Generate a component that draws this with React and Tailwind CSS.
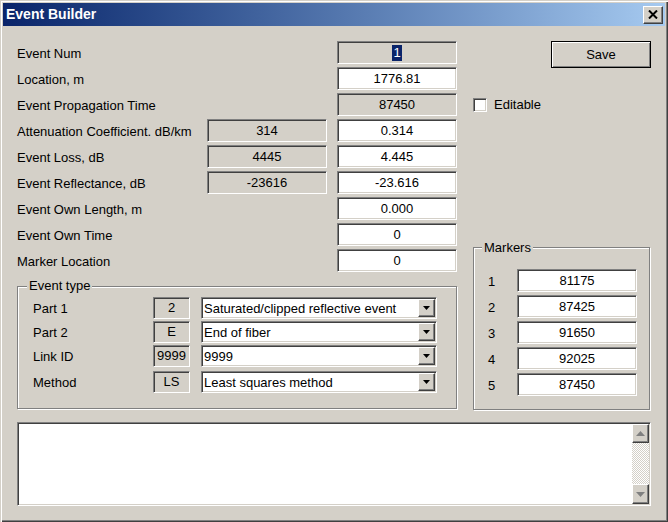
import React from 'react'

const sunken = "border border-t-[#808080] border-l-[#808080] border-b-white border-r-white shadow-[inset_1px_1px_0_#404040,inset_-1px_-1px_0_#d4d0c8]"
const raised = "border border-t-white border-l-white border-b-[#404040] border-r-[#404040] shadow-[inset_-1px_-1px_0_#808080,inset_1px_1px_0_#d4d0c8]"
const etched = "border border-[#808080] shadow-[inset_1px_1px_0_#fff,1px_1px_0_#fff]"

const Field = ({ value, gray, className = '' }) => (
    <div className={`${sunken} h-[23px] pt-[1px] flex items-center justify-center ${gray ? 'bg-[#d4d0c8]' : 'bg-white'} ${className}`}>
        {value}
    </div>
)

const Combo = ({ value }) => (
    <div className={`${sunken} bg-white h-[22px] w-[236px] flex items-center pl-[2px] pr-[1px]`}>
        <span className="flex-1 leading-none pt-[1px]">{value}</span>
        <div className={`${raised} bg-[#d4d0c8] w-[17px] h-[18px] flex items-center justify-center`}>
            <svg width="7" height="4" viewBox="0 0 7 4"><path d="M0 0h7L3.5 4z" fill="#000" /></svg>
        </div>
    </div>
)

const rows = [
    { label: 'Event Num', value: <span className="bg-[#0a246a] text-white px-[1px] leading-[16px]">1</span>, gray: true },
    { label: 'Location, m', value: '1776.81' },
    { label: 'Event Propagation Time', value: '87450', gray: true },
    { label: 'Attenuation Coefficient. dB/km', raw: '314', value: '0.314' },
    { label: 'Event Loss, dB', raw: '4445', value: '4.445' },
    { label: 'Event Reflectance, dB', raw: '-23616', value: '-23.616' },
    { label: 'Event Own Length, m', value: '0.000' },
    { label: 'Event Own Time', value: '0' },
    { label: 'Marker Location', value: '0' },
]

const eventType = [
    { label: 'Part 1', code: '2', value: 'Saturated/clipped reflective event' },
    { label: 'Part 2', code: 'E', value: 'End of fiber' },
    { label: 'Link ID', code: '9999', value: '9999' },
    { label: 'Method', code: 'LS', value: 'Least squares method' },
]

const markers = ['81175', '87425', '91650', '92025', '87450']

export default function App() {
    return (
        <div className="w-[668px] h-[522px] bg-[#d4d0c8] p-[3px] text-[13px] text-black font-['Liberation_Sans',Arial,sans-serif] shadow-[inset_1px_1px_0_#d4d0c8,inset_2px_2px_0_#fff,inset_-1px_-1px_0_#404040,inset_-2px_-2px_0_#808080] overflow-hidden">
            {/* Title bar */}
            <div className="h-[23px] flex items-center justify-between pl-[3px] pr-[2px] bg-gradient-to-r from-[#0a246a] to-[#a6caf0]">
                <span className="text-white font-bold text-[14px]">Event Builder</span>
                <div className={`${raised} bg-[#d4d0c8] w-[20px] h-[18px] flex items-center justify-center`}>
                    <svg width="10" height="9" viewBox="0 0 10 9">
                        <path d="M1 0.5l8 8M9 0.5l-8 8" stroke="#000" strokeWidth="2" />
                    </svg>
                </div>
            </div>

            <div className="pl-[14px] pt-[15px]">
                <div className="flex">
                    {/* Left column */}
                    <div className="w-[440px]">
                        <div className="flex flex-col gap-[3px]">
                            {rows.map((r) => (
                                <div key={r.label} className="flex items-center h-[23px]">
                                    <span className="w-[190px] pt-[2px]">{r.label}</span>
                                    <div className="w-[120px]">
                                        {r.raw && <Field value={r.raw} gray />}
                                    </div>
                                    <Field value={r.value} gray={r.gray} className="w-[120px] ml-[10px]" />
                                </div>
                            ))}
                        </div>

                        <div className={`${etched} relative mt-[14px] w-[440px] h-[123px] pl-[15px] pt-[10px]`}>
                            <span className="absolute left-[9px] top-[-9px] bg-[#d4d0c8] px-[2px] leading-[16px]">Event type</span>
                            <div className="flex flex-col gap-[2px]">
                                {eventType.map((e, i) => (
                                    <div key={e.label} className={`flex items-center h-[22px] ${i === 3 ? 'mt-[2px]' : ''}`}>
                                        <span className="w-[120px] pt-[2px]">{e.label}</span>
                                        <div className={`${sunken} bg-[#d4d0c8] w-[37px] h-[22px] flex items-center justify-center`}>{e.code}</div>
                                        <div className="ml-[11px]"><Combo value={e.value} /></div>
                                    </div>
                                ))}
                            </div>
                        </div>
                    </div>

                    {/* Right column */}
                    <div className="ml-[16px] w-[178px] flex flex-col">
                        <button className="self-end w-[100px] h-[27px] pt-[1px] border border-black bg-[#d4d0c8] shadow-[inset_1px_1px_0_#fff,inset_-1px_-1px_0_#808080,inset_-2px_-2px_0_#d4d0c8]">
                            Save
                        </button>
                        <div className="mt-[25px] h-[23px] flex items-center">
                            <div className={`${sunken} bg-white w-[14px] h-[14px]`} />
                            <span className="ml-[7px] pt-[1px]">Editable</span>
                        </div>
                        <div className={`${etched} relative mt-[131px] w-[177px] h-[163px] pl-[14px] pt-[21px]`}>
                            <span className="absolute left-[8px] top-[-8px] bg-[#d4d0c8] px-[2px] leading-[16px]">Markers</span>
                            <div className="flex flex-col gap-[3px]">
                                {markers.map((m, i) => (
                                    <div key={i} className="flex items-center h-[23px]">
                                        <span className="w-[29px] pt-[2px]">{i + 1}</span>
                                        <Field value={m} className="w-[120px]" />
                                    </div>
                                ))}
                            </div>
                        </div>
                    </div>
                </div>

                {/* Notes area */}
                <div className={`${sunken} bg-white mt-[12px] w-[634px] h-[84px] flex justify-end p-[1px]`}>
                    <div className="w-[17px] h-full flex flex-col">
                        <div className={`${raised} bg-[#d4d0c8] h-[19px] flex items-center justify-center`}>
                            <svg width="9" height="5" viewBox="0 0 9 5"><path d="M4.5 0L9 5H0z" fill="#808080" /></svg>
                        </div>
                        <div className="flex-1 bg-[repeating-conic-gradient(#d4d0c8_0%_25%,#ffffff_0%_50%)] bg-[length:2px_2px]" />
                        <div className={`${raised} bg-[#d4d0c8] h-[20px] flex items-center justify-center`}>
                            <svg width="9" height="5" viewBox="0 0 9 5"><path d="M0 0h9L4.5 5z" fill="#808080" /></svg>
                        </div>
                    </div>
                </div>
            </div>
        </div>
    )
}
